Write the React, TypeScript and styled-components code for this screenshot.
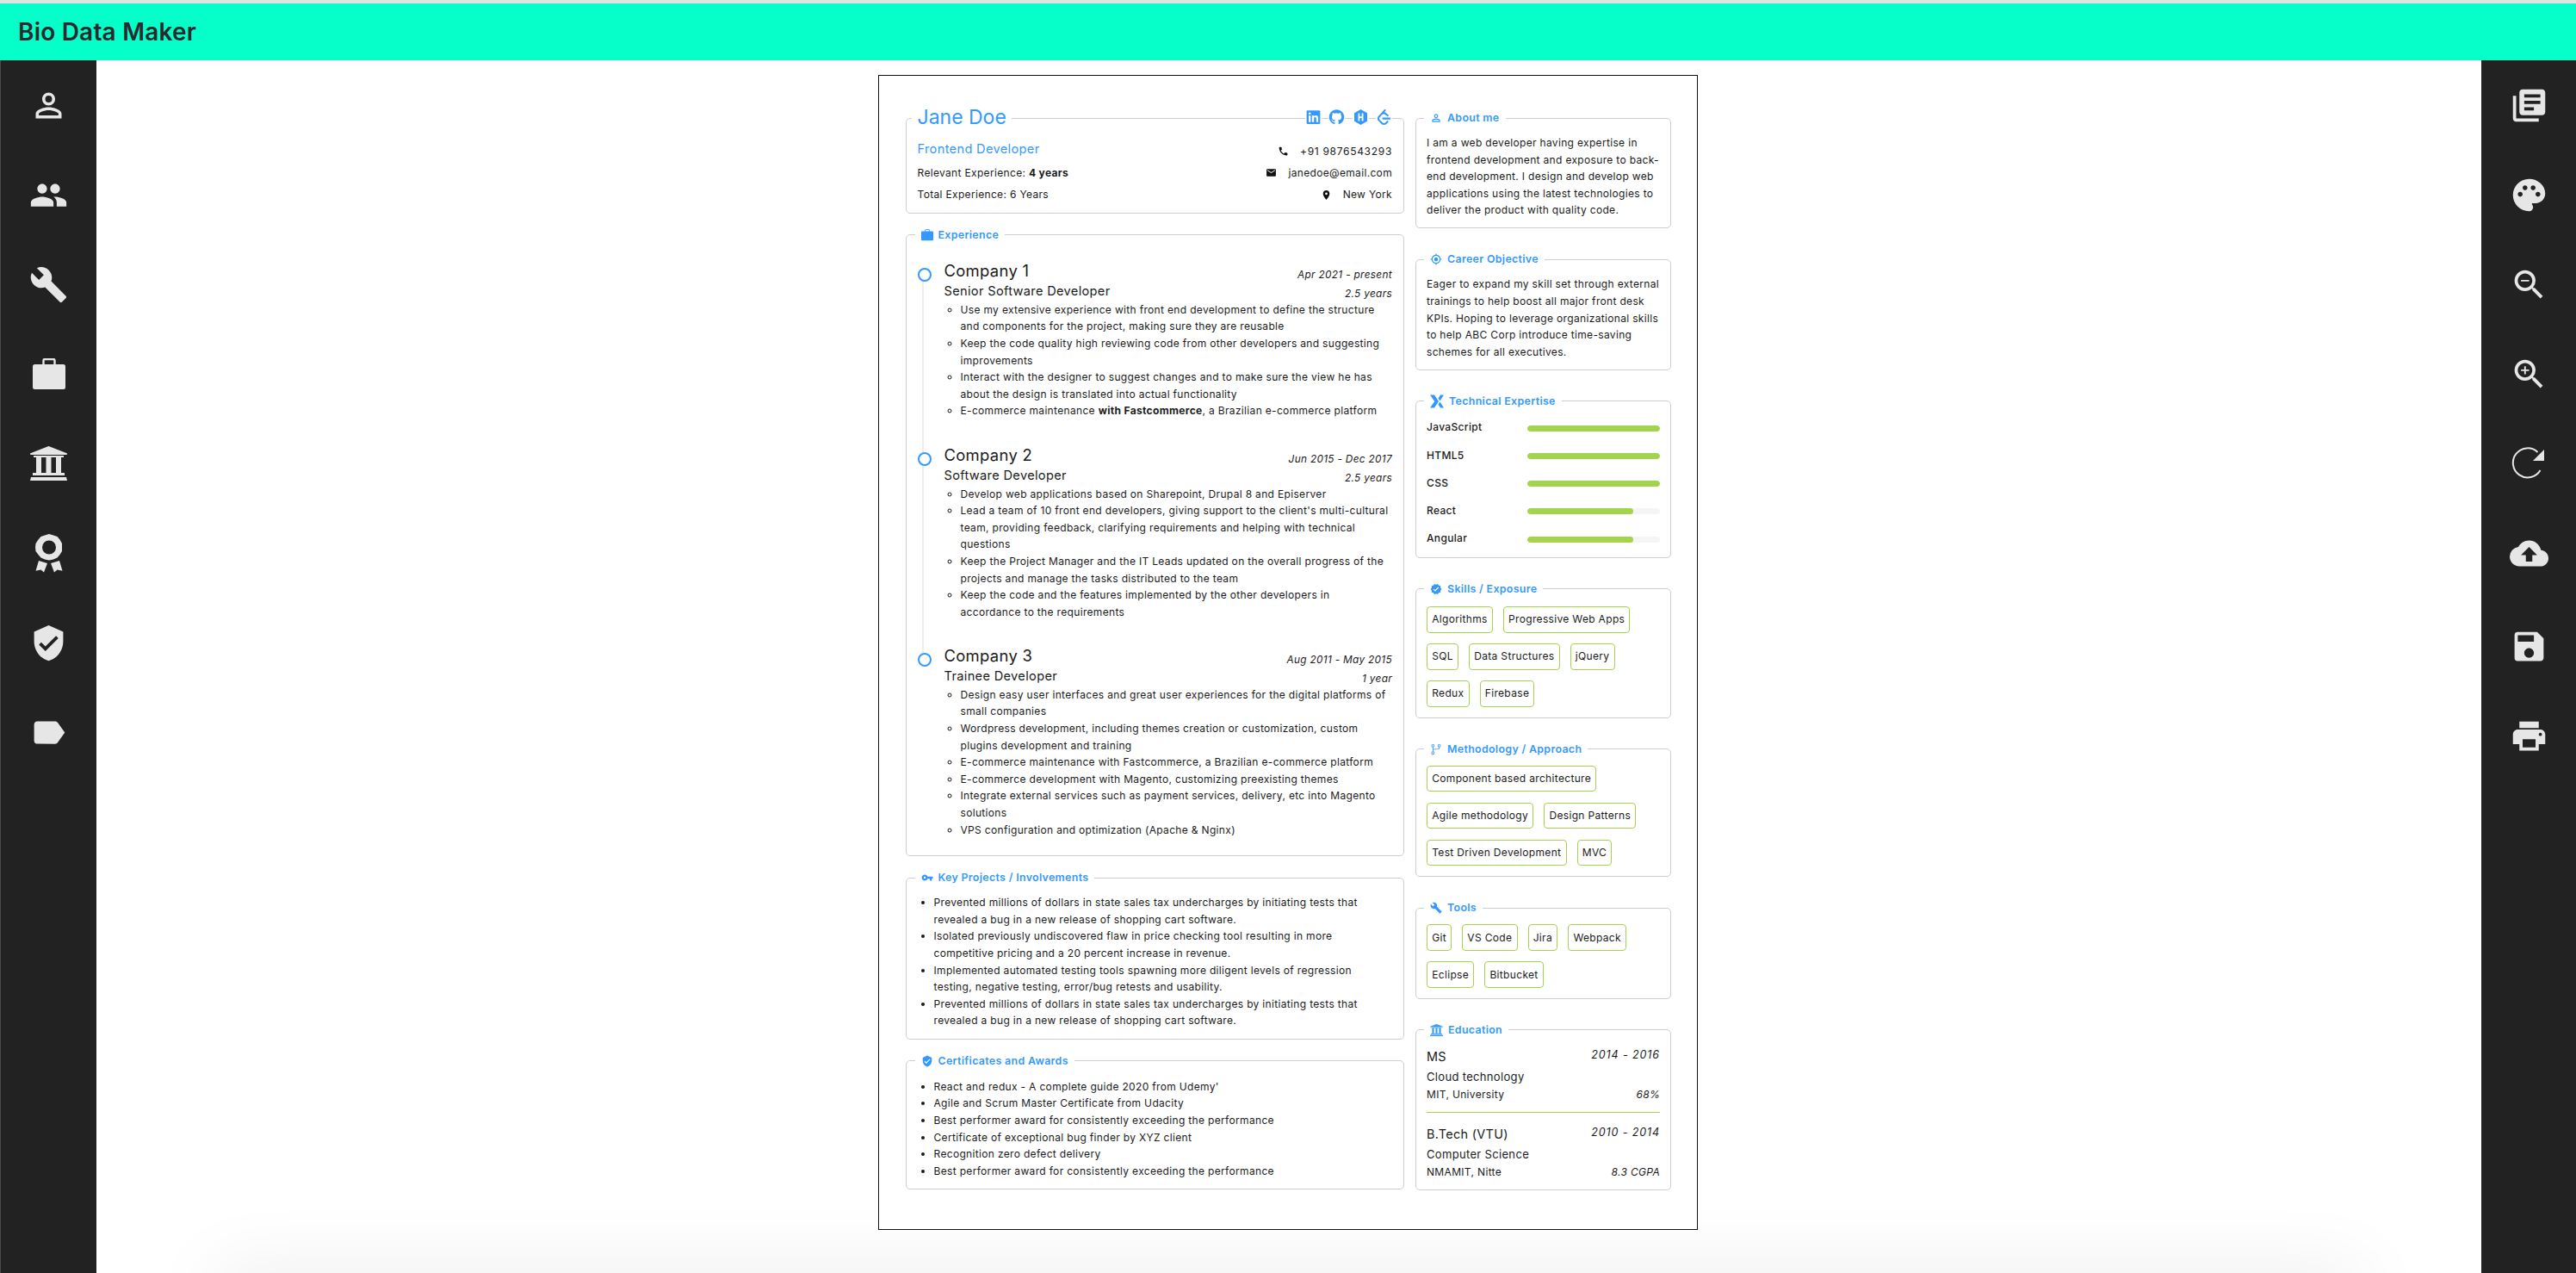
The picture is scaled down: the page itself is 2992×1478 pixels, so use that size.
import React from "react";
import styled, { createGlobalStyle } from "styled-components";
import {
  MdPersonOutline, MdPeople, MdBuild, MdVerifiedUser, MdLabel, MdLibraryBooks, MdPalette, MdZoomOut, MdZoomIn,
  MdCloudUpload, MdSave, MdPrint, MdPhone, MdEmail, MdLocationOn, MdGpsFixed, MdVerified, MdVpnKey,
} from "react-icons/md";
import { FaLinkedin, FaGithub } from "react-icons/fa";
import { SiLeetcode } from "react-icons/si";
import { GoGitBranch } from "react-icons/go";

const BLUE = "#3399ff";
const GREEN = "#a4d44c";

const Global = createGlobalStyle`
  html, body { margin: 0; padding: 0; height: 100%; overflow: hidden; background: #fff; }
  body { font-family: Inter, "Liberation Sans", sans-serif; color: #1a1a1a; }
  * { box-sizing: border-box; }
`;

const Shell = styled.div`
  height: 100vh;
  display: flex;
  flex-direction: column;
  padding-top: 4px;
  background: #e2e2e2;
`;
const Header = styled.header`
  height: 66px;
  flex: none;
  background: #06ffc8;
  display: flex;
  align-items: center;
  padding-left: 21px;
`;
const Title = styled.h1`
  margin: 0;
  font-size: 28px;
  font-weight: 600;
  letter-spacing: 0.2px;
  color: #2a2a2e;
`;
const Body = styled.div`
  flex: 1;
  display: flex;
  min-height: 0;
  background: #fff;
`;
const Rail = styled.nav<{ $side: "left" | "right" }>`
  flex: none;
  width: ${(p) => (p.$side === "left" ? "112px" : "110px")};
  background: #222222;
  display: flex;
  flex-direction: column;
  border-left: ${(p) => (p.$side === "left" ? "1px solid #4a4a4a" : "none")};
`;
const RailItem = styled.div<{ $tall?: boolean }>`
  height: ${(p) => (p.$tall ? "108px" : "104px")};
  padding-bottom: ${(p) => (p.$tall ? "4px" : "0")};
  flex: none;
  display: flex;
  align-items: center;
  justify-content: center;
  color: #e6e6e6;
  font-size: 45px;
`;
const Canvas = styled.main`
  flex: 1;
  position: relative;
  overflow: hidden;
  display: flex;
  justify-content: center;
  align-items: flex-start;
  padding-top: 17px;
`;
const FloorShadow = styled.div`
  position: absolute;
  left: 140px;
  right: 140px;
  bottom: -30px;
  height: 18px;
  box-shadow: 0 0 85px rgba(0, 0, 0, 0.22);
  border-radius: 8px;
`;
const Paper = styled.article`
  width: 952px;
  height: 1341px;
  flex: none;
  margin-right: 2px;
  border: 1px solid #111;
  background: #fff;
  padding: 32px 0 0 31px;
  display: flex;
  gap: 13px;
  align-items: flex-start;
  position: relative;
  z-index: 1;
  font-size: 12px;
  line-height: 19.6px;
  letter-spacing: 0.33px;
`;
const LeftColumn = styled.div`
  width: 579px;
  flex: none;
  display: flex;
  flex-direction: column;
  gap: 17px;
`;
const RightColumn = styled.div`
  width: 297px;
  flex: none;
  margin-top: 9px;
  display: flex;
  flex-direction: column;
  gap: 28px;
`;
const Panel = styled.fieldset<{ $pad?: string }>`
  margin: 0;
  min-width: 0;
  border: 1px solid #cdcdcd;
  border-radius: 5px;
  padding: ${(p) => p.$pad || "11px 12px 10.5px"};
  position: relative;
`;
const PanelTitle = styled.legend`
  margin-left: -3px;
  padding: 0 7px;
  height: 16px;
  display: flex;
  align-items: center;
  gap: 6px;
  color: ${BLUE};
  font-size: 12.4px;
  font-weight: 600;
  line-height: 16px;
  svg { flex: none; font-size: 14px; }
`;
const NameTitle = styled.legend`
  margin-left: -7px;
  padding: 0 6px 0 7px;
  height: 34px;
  color: ${BLUE};
  font-size: 23px;
  font-weight: 400;
  letter-spacing: 0;
  line-height: 32px;
`;
const Socials = styled.div`
  position: absolute;
  top: -27px;
  right: 13px;
  display: flex;
  gap: 8.5px;
  color: ${BLUE};
  svg { display: block; background: #fff; width: 19px; height: 18px; }
`;
const IntroGrid = styled.div`
  display: flex;
  justify-content: space-between;
`;
const IntroStack = styled.div<{ $right?: boolean }>`
  display: flex;
  flex-direction: column;
  align-items: ${(p) => (p.$right ? "flex-end" : "flex-start")};
`;
const IntroLine = styled.div`
  height: 25.3px;
  display: flex;
  align-items: center;
  gap: 13px;
  svg { font-size: 13px; color: #111; }
`;
const PhoneNumber = styled.span`
  letter-spacing: 0.7px;
`;
const Role = styled.div`
  height: 25.3px;
  margin-top: -2px;
  margin-bottom: 2px;
  display: flex;
  align-items: center;
  color: ${BLUE};
  font-size: 14.6px;
`;
const Timeline = styled.div`
  display: flex;
  flex-direction: column;
  gap: 28.5px;
`;
const Job = styled.section<{ $last?: boolean }>`
  position: relative;
  padding-left: 31px;
  &::before {
    content: "";
    position: absolute;
    left: 0;
    top: 9px;
    width: 12px;
    height: 12px;
    border-radius: 50%;
    border: 2.5px solid ${BLUE};
    background: #fff;
    z-index: 1;
  }
  &::after {
    content: "";
    display: ${(p) => (p.$last ? "none" : "block")};
    position: absolute;
    left: 5px;
    top: 16px;
    bottom: -45px;
    width: 2px;
    background: #eeeeee;
  }
`;
const JobRow = styled.div`
  height: 24px;
  display: flex;
  justify-content: space-between;
  align-items: flex-end;
`;
const Company = styled.div`
  font-size: 18.4px;
  line-height: 24px;
  align-self: center;
`;
const Position = styled.div`
  font-size: 14.6px;
  line-height: 24px;
`;
const Dates = styled.div<{ $lift?: number }>`
  font-size: 11.8px;
  font-style: italic;
  line-height: 14px;
  margin-bottom: ${(p) => p.$lift || 0}px;
`;
const List = styled.ul<{ $type: "circle" | "disc" }>`
  margin: 0;
  padding-left: 19px;
  list-style-type: ${(p) => p.$type};
`;
const Skill = styled.div`
  height: 32.3px;
  display: flex;
  align-items: center;
  font-weight: 500;
`;
const SkillName = styled.div`
  width: 117px;
  flex: none;
`;
const SkillTrack = styled.div`
  width: 154px;
  height: 7px;
  margin-top: 2px;
  border-radius: 4px;
  background: #f5f5f5;
  overflow: hidden;
`;
const SkillFill = styled.div`
  height: 100%;
  border-radius: 4px;
  background: ${GREEN};
`;
const Chips = styled.div`
  display: flex;
  flex-wrap: wrap;
  gap: 12.3px 12px;
`;
const Chip = styled.span`
  height: 30.7px;
  display: flex;
  align-items: center;
  padding: 0 5.2px;
  border: 1px solid ${GREEN};
  border-radius: 4px;
  font-size: 12px;
`;
const EduTop = styled.div`
  height: 22px;
  display: flex;
  justify-content: space-between;
`;
const Degree = styled.div`
  font-size: 14.4px;
  line-height: 22px;
`;
const EduYears = styled.div`
  font-size: 12.5px;
  font-style: italic;
  letter-spacing: 0.9px;
  line-height: 17px;
`;
const EduField = styled.div`
  margin-top: 2px;
  font-size: 13px;
  line-height: 21px;
`;
const EduBottom = styled.div`
  height: 20px;
  display: flex;
  justify-content: space-between;
  font-size: 12px;
  line-height: 20px;
`;
const Score = styled.span`
  font-style: italic;
`;
const EduDivider = styled.hr`
  margin: 10.5px 0 14px;
  border: 0;
  border-top: 1px solid ${GREEN};
`;

const Briefcase = (p: { size?: number }) => (
  <svg width={p.size || 38} height={(p.size || 38) * 36 / 38} viewBox="0 0 38 36" fill="currentColor">
    <rect x="0" y="7" width="38" height="29" rx="2.5" />
    <path d="M12.5 8V2.5A1.5 1.5 0 0 1 14 1h10a1.5 1.5 0 0 1 1.5 1.5V8" fill="none" stroke="currentColor" strokeWidth="2.4" />
  </svg>
);
const Bank = (p: { size?: number }) => (
  <svg width={p.size || 43} height={(p.size || 43) * 40 / 43} viewBox="0 0 43 40" fill="currentColor">
    <path d="M21.5 0 42 8a.8.8 0 0 1 0 2H1a.8.8 0 0 1 0-2z" />
    <rect x="4" y="11" width="35" height="2" />
    <rect x="7" y="13" width="6" height="18" />
    <rect x="18.5" y="13" width="6" height="18" />
    <rect x="30" y="13" width="6" height="18" />
    <rect x="3" y="31" width="37" height="3" />
    <path d="M1 36h41l1 4H0z" />
  </svg>
);
const Award = () => (
  <svg width="34" height="45" viewBox="0 0 34 45" fill="currentColor">
    <path fillRule="evenodd" d="M12 1.500 17 0l5 1.500 4.500 1.500 3 3.500 2.500 4.500V20l-2.500 4-3 3.500-4.500 2-5 1-5-1-4.500-2-3-3.500L1.500 20 1 15.500l.500-4.500L4.500 6.500l3-3.500zM17 7.500a8 8 0 1 0 0 16 8 8 0 0 0 0-16z" />
    <path d="M5 31l10 3-4 10.500-3.500-3-6 1.300zM29 31l-10 3 4 10.500 3.500-3 6 1.300z" />
  </svg>
);
const Refresh = () => (
  <svg width="40" height="38" viewBox="0 0 40 38" fill="none">
    <path d="M33.500 27A17 17 0 1 1 30.500 6" stroke="currentColor" strokeWidth="2" />
    <path d="M38 3v13H25z" fill="currentColor" />
  </svg>
);
const TechMark = () => (
  <svg width="16" height="16" viewBox="0 0 16 16" fill="currentColor">
    <path d="M0 .5h5l5 7.500-5 7.500H0L5.200 8z" />
    <path d="M16 .5h-4L9.500 4.400l2 3zM16 15.500h-4l-2.500-3.900 2-3z" />
  </svg>
);
const HexLogo = () => (
  <svg viewBox="0 0 18 18" fill="currentColor">
    <path fillRule="evenodd" d="M9 0l7.500 4.200v9.600L9 18l-7.500-4.200V4.200zM6 4.500v9h1.800V9.900h2.400v3.600H12v-9h-1.800v3.700H7.800V4.500z" />
  </svg>
);

const leftRail = [
  <MdPersonOutline key="a" />, <MdPeople key="b" />, <MdBuild key="c" />, <Briefcase key="d" />,
  <Bank key="e" />, <Award key="f" />, <MdVerifiedUser key="g" />, <MdLabel key="h" />,
];

const jobs = [
  {
    company: "Company 1", role: "Senior Software Developer", dates: "Apr 2021 - present", span: "2.5 years",
    items: [
      <>Use my extensive experience with front end development to define the structure and components for the project, making sure they are reusable</>,
      <>Keep the code quality high reviewing code from other developers and suggesting improvements</>,
      <>Interact with the designer to suggest changes and to make sure the view he has about the design is translated into actual functionality</>,
      <>E-commerce maintenance <b>with Fastcommerce</b>, a Brazilian e-commerce platform</>,
    ],
  },
  {
    company: "Company 2", role: "Software Developer", dates: "Jun 2015 - Dec 2017", span: "2.5 years",
    items: [
      <>Develop web applications based on Sharepoint, Drupal 8 and Episerver</>,
      <>Lead a team of 10 front end developers, giving support to the client's multi-cultural team, providing feedback, clarifying requirements and helping with technical questions</>,
      <>Keep the Project Manager and the IT Leads updated on the overall progress of the projects and manage the tasks distributed to the team</>,
      <>Keep the code and the features implemented by the other developers in accordance to the requirements</>,
    ],
  },
  {
    company: "Company 3", role: "Trainee Developer", dates: "Aug 2011 - May 2015", span: "1 year",
    items: [
      <>Design easy user interfaces and great user experiences for the digital platforms of small companies</>,
      <>Wordpress development, including themes creation or customization, custom plugins development and training</>,
      <>E-commerce maintenance with Fastcommerce, a Brazilian e-commerce platform</>,
      <>E-commerce development with Magento, customizing preexisting themes</>,
      <>Integrate external services such as payment services, delivery, etc into Magento solutions</>,
      <>VPS configuration and optimization (Apache &amp; Nginx)</>,
    ],
  },
];

const projects = [
  "Prevented millions of dollars in state sales tax undercharges by initiating tests that revealed a bug in a new release of shopping cart software.",
  "Isolated previously undiscovered flaw in price checking tool resulting in more competitive pricing and a 20 percent increase in revenue.",
  "Implemented automated testing tools spawning more diligent levels of regression testing, negative testing, error/bug retests and usability.",
  "Prevented millions of dollars in state sales tax undercharges by initiating tests that revealed a bug in a new release of shopping cart software.",
];
const certificates = [
  "React and redux - A complete guide 2020 from Udemy'",
  "Agile and Scrum Master Certificate from Udacity",
  "Best performer award for consistently exceeding the performance",
  "Certificate of exceptional bug finder by XYZ client",
  "Recognition zero defect delivery",
  "Best performer award for consistently exceeding the performance",
];
const skills = [
  { name: "JavaScript", value: 100 }, { name: "HTML5", value: 100 }, { name: "CSS", value: 100 },
  { name: "React", value: 80 }, { name: "Angular", value: 80 },
];

const Chipset = ({ items }: { items: string[] }) => (
  <Chips>{items.map((t) => <Chip key={t}>{t}</Chip>)}</Chips>
);

export default function App() {
  return (
    <Shell>
      <Global />
      <Header><Title>Bio Data Maker</Title></Header>
      <Body>
        <Rail $side="left">
          {leftRail.map((icon, i) => <RailItem key={i}>{icon}</RailItem>)}
        </Rail>
        <Canvas>
          <FloorShadow />
          <Paper>
            <LeftColumn>
              <Panel $pad="9px 13px 8px 12.5px">
                <NameTitle>Jane Doe</NameTitle>
                <Socials>
                  <FaLinkedin /><FaGithub /><HexLogo /><SiLeetcode />
                </Socials>
                <IntroGrid>
                  <IntroStack>
                    <Role>Frontend Developer</Role>
                    <IntroLine><span>Relevant Experience: <b>4 years</b></span></IntroLine>
                    <IntroLine><span>Total Experience: 6 Years</span></IntroLine>
                  </IntroStack>
                  <IntroStack $right>
                    <IntroLine><MdPhone /><PhoneNumber>+91 9876543293</PhoneNumber></IntroLine>
                    <IntroLine><MdEmail /><span>janedoe@email.com</span></IntroLine>
                    <IntroLine><MdLocationOn /><span>New York</span></IntroLine>
                  </IntroStack>
                </IntroGrid>
              </Panel>
              <Panel $pad="21px 13px 20px 12.5px">
                <PanelTitle><Briefcase size={14} />Experience</PanelTitle>
                <Timeline>
                  {jobs.map((job, i) => (
                    <Job key={job.company} $last={i === jobs.length - 1}>
                      <JobRow><Company>{job.company}</Company><Dates>{job.dates}</Dates></JobRow>
                      <JobRow><Position>{job.role}</Position><Dates $lift={2}>{job.span}</Dates></JobRow>
                      <List $type="circle">
                        {job.items.map((item, k) => <li key={k}>{item}</li>)}
                      </List>
                    </Job>
                  ))}
                </Timeline>
              </Panel>
              <Panel $pad="11px 13px 11px 12.5px">
                <PanelTitle><MdVpnKey />Key Projects / Involvements</PanelTitle>
                <List $type="disc">{projects.map((t, i) => <li key={i}>{t}</li>)}</List>
              </Panel>
              <Panel $pad="12px 13px 11px 12.5px">
                <PanelTitle><MdVerifiedUser />Certificates and Awards</PanelTitle>
                <List $type="disc">{certificates.map((t, i) => <li key={i}>{t}</li>)}</List>
              </Panel>
            </LeftColumn>
            <RightColumn>
              <Panel>
                <PanelTitle><MdPersonOutline />About me</PanelTitle>
                I am a web developer having expertise in frontend development and exposure to back-end development. I design and develop web applications using the latest technologies to deliver the product with quality code.
              </Panel>
              <Panel>
                <PanelTitle><MdGpsFixed />Career Objective</PanelTitle>
                Eager to expand my skill set through external trainings to help boost all major front desk KPIs. Hoping to leverage organizational skills to help ABC Corp introduce time-saving schemes for all executives.
              </Panel>
              <Panel $pad="6px 12px 5.5px">
                <PanelTitle><TechMark />Technical Expertise</PanelTitle>
                {skills.map((s) => (
                  <Skill key={s.name}>
                    <SkillName>{s.name}</SkillName>
                    <SkillTrack><SkillFill style={{ width: `${s.value}%` }} /></SkillTrack>
                  </Skill>
                ))}
              </Panel>
              <Panel $pad="12px 12px 12px">
                <PanelTitle><MdVerified />Skills / Exposure</PanelTitle>
                <Chipset items={["Algorithms", "Progressive Web Apps", "SQL", "Data Structures", "jQuery", "Redux", "Firebase"]} />
              </Panel>
              <Panel $pad="11px 12px 12px">
                <PanelTitle><GoGitBranch />Methodology / Approach</PanelTitle>
                <Chipset items={["Component based architecture", "Agile methodology", "Design Patterns", "Test Driven Development", "MVC"]} />
              </Panel>
              <Panel $pad="11px 12px 12px">
                <PanelTitle><MdBuild />Tools</PanelTitle>
                <Chipset items={["Git", "VS Code", "Jira", "Webpack", "Eclipse", "Bitbucket"]} />
              </Panel>
              <Panel $pad="12px 12px 10px">
                <PanelTitle><Bank size={15} />Education</PanelTitle>
                <EduTop><Degree>MS</Degree><EduYears>2014 - 2016</EduYears></EduTop>
                <EduField>Cloud technology</EduField>
                <EduBottom><span>MIT, University</span><Score>68%</Score></EduBottom>
                <EduDivider />
                <EduTop><Degree>B.Tech (VTU)</Degree><EduYears>2010 - 2014</EduYears></EduTop>
                <EduField>Computer Science</EduField>
                <EduBottom><span>NMAMIT, Nitte</span><Score>8.3 CGPA</Score></EduBottom>
              </Panel>
            </RightColumn>
          </Paper>
        </Canvas>
        <Rail $side="right">
          <RailItem><MdLibraryBooks /></RailItem>
          <RailItem><MdPalette /></RailItem>
          <RailItem><MdZoomOut /></RailItem>
          <RailItem><MdZoomIn /></RailItem>
          <RailItem><Refresh /></RailItem>
          <RailItem $tall><MdCloudUpload /></RailItem>
          <RailItem><MdSave /></RailItem>
          <RailItem><MdPrint /></RailItem>
        </Rail>
      </Body>
    </Shell>
  );
}
